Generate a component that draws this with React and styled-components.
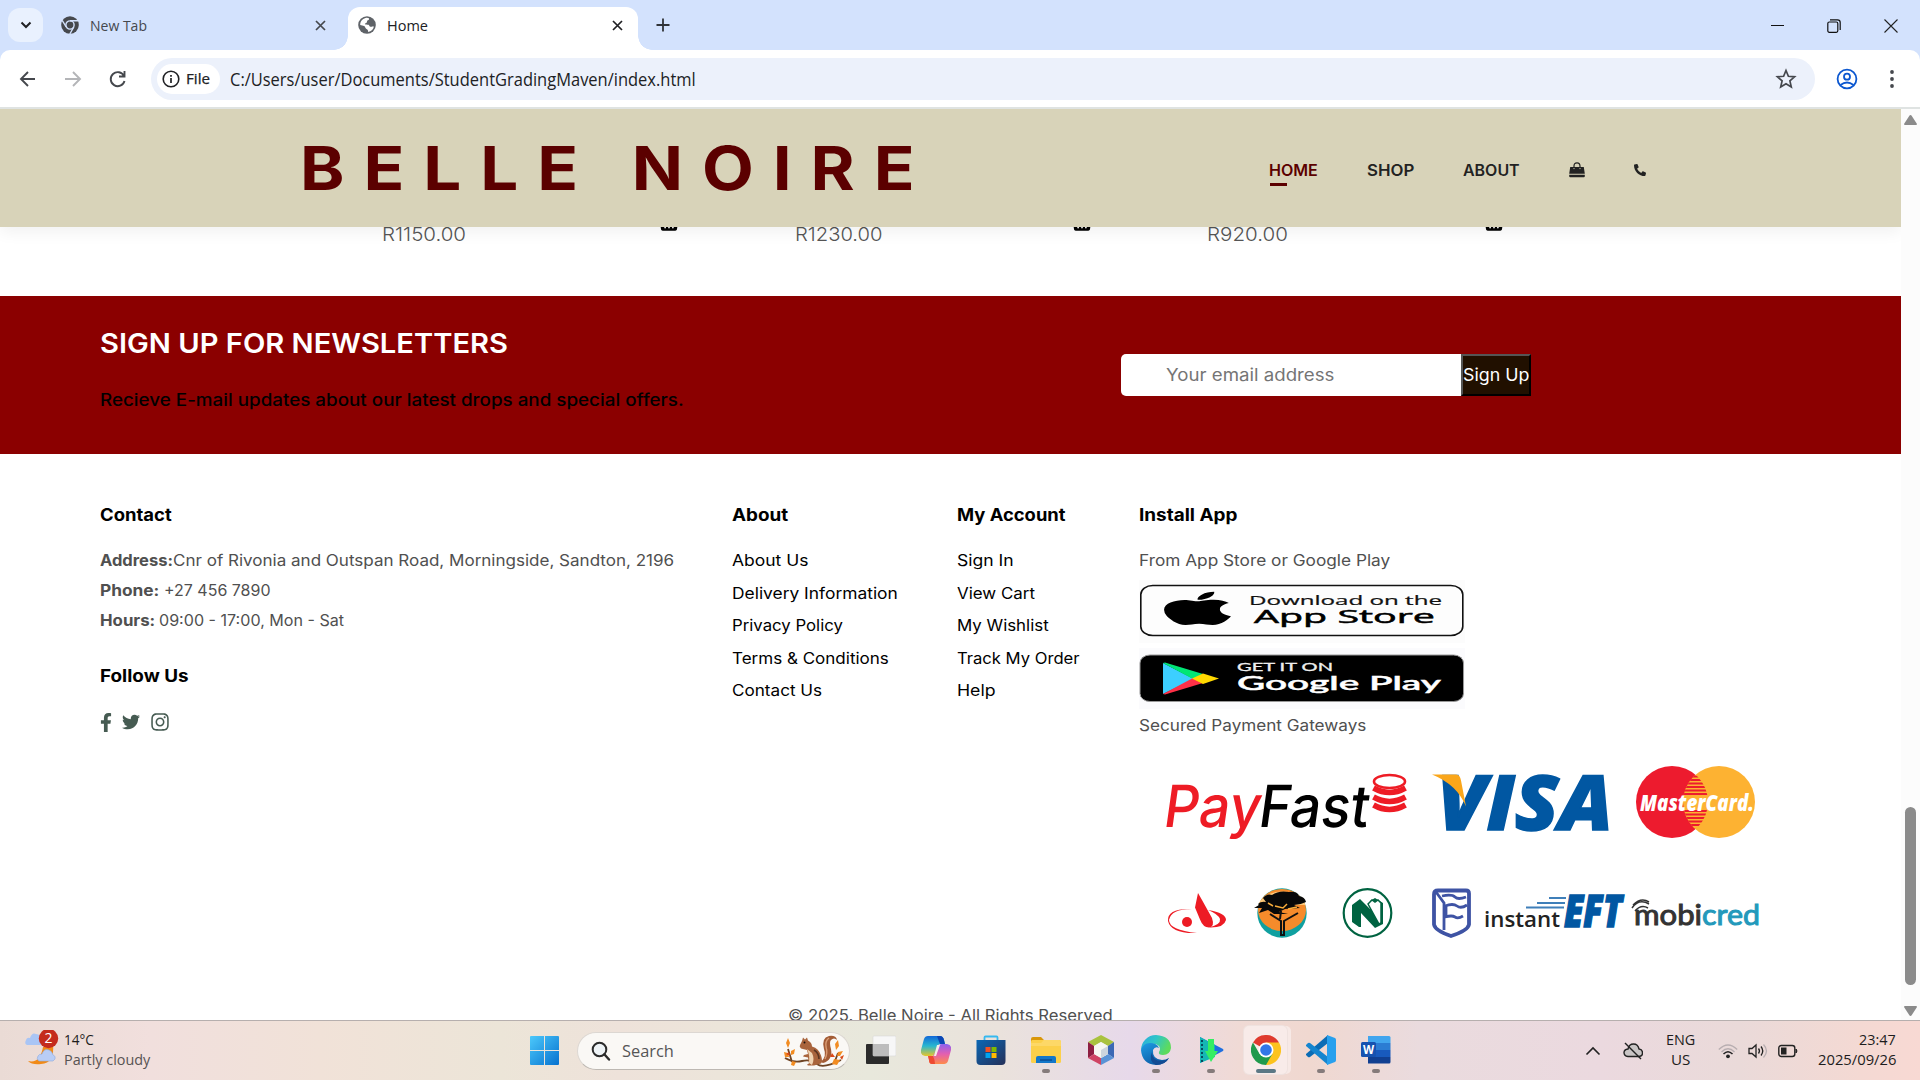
import React, { useLayoutEffect, useRef, useState } from "react";
import styled, { createGlobalStyle } from "styled-components";
import { FaFacebookF, FaTwitter, FaInstagram, FaPhoneAlt, FaShoppingBasket, FaApple } from "react-icons/fa";

const SITE = 'Inter, "Open Sans", sans-serif';
const SYS = '"Open Sans", "Noto Sans", sans-serif';

const GlobalStyle = createGlobalStyle`
  * { box-sizing: border-box; }
  html, body { margin: 0; padding: 0; overflow: hidden; background: #fff; }
  svg { display: block; flex: none; }
`;

/* ---------- text that keeps a given set width ---------- */
const FitBox = styled.span`
  display: inline-block;
  flex: none;
  width: ${(p) => p.$w}px;
  white-space: nowrap;
  vertical-align: top;
`;
const FitInner = styled.span`
  display: inline-block;
  transform-origin: 0 50%;
`;
function Fit({ w, children }) {
  const ref = useRef(null);
  const [scale, setScale] = useState(1);
  useLayoutEffect(() => {
    if (ref.current) setScale(w / ref.current.offsetWidth);
  }, [w]);
  return (
    <FitBox $w={w}>
      <FitInner ref={ref} style={{ transform: `scaleX(${scale})` }}>{children}</FitInner>
    </FitBox>
  );
}

/* ---------- window ---------- */
const Screen = styled.div`
  width: 1920px;
  height: 1080px;
  display: flex;
  flex-direction: column;
  overflow: hidden;
  background: #fff;
`;
const TabStrip = styled.div`
  height: 50px;
  flex: none;
  display: flex;
  align-items: flex-end;
  background: #d3e2fd;
  padding-left: 8px;
  font: 400 14.5px/20px ${SYS};
  color: #45484d;
`;
const TabSearch = styled.div`
  width: 35px;
  height: 34px;
  margin-bottom: 8px;
  border-radius: 12px;
  background: #e9f1fe;
  display: flex;
  align-items: center;
  justify-content: center;
`;
const Tab = styled.div`
  position: relative;
  display: flex;
  align-items: center;
  height: ${(p) => (p.$active ? 43 : 50)}px;
  width: ${(p) => (p.$active ? 290 : 305)}px;
  padding: ${(p) => (p.$active ? "0 15px 7px 10px" : "0 22px 0 18px")};
  gap: 11px;
  color: ${(p) => (p.$active ? "#202124" : "#45484d")};
  background: ${(p) => (p.$active ? "#fff" : "transparent")};
  border-radius: 12px 12px 0 0;
  &::before, &::after {
    content: "";
    display: ${(p) => (p.$active ? "block" : "none")};
    position: absolute;
    bottom: 0;
    width: 14px;
    height: 14px;
  }
  &::before { left: -14px; background: radial-gradient(circle at 0 0, transparent 13.5px, #fff 14px); }
  &::after { right: -14px; background: radial-gradient(circle at 100% 0, transparent 13.5px, #fff 14px); }
`;
const TabTitle = styled.div`padding-top: 2px;`;
const Spacer = styled.div`flex: 1;`;
const NewTab = styled.div`
  height: 50px;
  margin-left: 18px;
  display: flex;
  align-items: center;
`;
const WinControls = styled.div`
  height: 48px;
  display: flex;
  align-items: center;
  gap: 43px;
  padding-right: 22px;
`;
const ToolbarWrap = styled.div`
  height: 59px;
  flex: none;
  background: #d3e2fd;
`;
const Toolbar = styled.div`
  height: 59px;
  background: #fff;
  border-radius: 10px 10px 0 0;
  border-bottom: 2px solid #dfe3e2;
  display: flex;
  align-items: center;
  padding-left: 18px;
`;
const NavButtons = styled.div`
  display: flex;
  gap: 25px;
  width: 133px;
`;
const Omnibox = styled.div`
  width: 1664px;
  height: 42px;
  border-radius: 21px;
  background: #ecf1fb;
  display: flex;
  align-items: center;
  padding: 0 18px 0 6px;
  font: 400 17.5px/24px ${SYS};
  color: #202124;
`;
const FileChip = styled.div`
  width: 63px;
  height: 30px;
  border-radius: 15px;
  background: #fff;
  display: flex;
  align-items: center;
  gap: 6px;
  padding-left: 5px;
  margin-right: 10px;
  font: 500 14.5px/20px ${SYS};
  -webkit-text-stroke: 0.25px #202124;
`;
const ToolbarEnd = styled.div`
  display: flex;
  align-items: center;
  gap: 32px;
  margin-left: 21px;
`;

/* ---------- page ---------- */
const Viewport = styled.div`
  height: 911px;
  flex: none;
  display: flex;
`;
const Page = styled.div`
  width: 1901px;
  height: 911px;
  overflow: hidden;
  background: #fff;
  font-family: ${SITE};
`;
const Scrollbar = styled.div`
  width: 19px;
  background: #fcfcfc;
  display: flex;
  flex-direction: column;
  align-items: center;
  padding: 6px 1px 4px 0;
`;
const Thumb = styled.div`
  width: 11px;
  height: 178px;
  margin: auto 0 21px;
  border-radius: 6px;
  background: #8b8b8b;
`;
const Header = styled.header`
  position: relative;
  z-index: 2;
  height: 118px;
  display: flex;
  align-items: center;
  padding-left: 300px;
  background: #d8d3b9;
  box-shadow: 0 5px 15px rgba(0, 0, 0, 0.06);
`;
const Brand = styled.h1`
  margin: 0;
  width: 969px;
  font-weight: 700;
  font-size: 60.5px;
  line-height: 80px;
  color: #5b0000;
  letter-spacing: 17px;
`;
const Menu = styled.nav`
  display: flex;
  align-items: center;
  gap: 49px;
  padding-top: 4px;
`;
const MenuLink = styled.a`
  position: relative;
  font-size: 15.4px;
  font-weight: 600;
  line-height: 25px;
  color: ${(p) => (p.$active ? "#5b0000" : "#222")};
  &::after {
    content: "";
    display: ${(p) => (p.$active ? "block" : "none")};
    position: absolute;
    left: 1px;
    bottom: -3px;
    width: 17px;
    height: 3px;
    background: #5b0000;
  }
`;
const Products = styled.section`
  height: 69px;
  display: flex;
  padding-left: 382px;
  overflow: hidden;
`;
const Product = styled.div`
  width: 412.5px;
  display: flex;
  font-size: 19.3px;
  font-weight: 350;
  line-height: 30px;
  color: #555;
`;
const Price = styled.div`
  width: 277px;
  margin-top: -8px;
`;
const Basket = styled.div`
  margin-top: -14px;
  color: #000;
`;
const Newsletter = styled.section`
  height: 158px;
  display: flex;
  background: #8b0000;
  padding-left: 100px;
`;
const NewsText = styled.div`width: 1021px;`;
const NewsTitle = styled.h2`
  margin: 29px 0 0;
  font-weight: 600;
  font-size: 27.2px;
  line-height: 38px;
  color: #fff;
`;
const NewsPara = styled.p`
  margin: 25px 0 0;
  font-weight: 550;
  font-size: 16.8px;
  line-height: 24px;
  color: #000;
`;
const Form = styled.div`
  display: flex;
  height: 42px;
  margin-top: 58px;
  font-size: 17px;
  font-weight: 370;
  line-height: 42px;
`;
const EmailField = styled.div`
  width: 340px;
  padding-left: 45px;
  border-radius: 5px 0 0 5px;
  background: #fff;
  color: #757575;
`;
const SignUp = styled.div`
  width: 70px;
  background: #211000;
  color: #fff;
  line-height: 39px;
  border: 2px solid;
  border-color: #555 #000 #000 #555;
`;
const Footer = styled.footer`
  display: grid;
  grid-template-columns: 632px 225px 182px 700px;
  padding: 49px 0 0 100px;
  font-size: 15.4px;
  font-weight: 370;
  color: #505050;
`;
const Column = styled.div`
  display: flex;
  flex-direction: column;
`;
const Heading = styled.h4`
  margin: ${(p) => p.$top || 0}px 0 17px;
  font-size: 17.2px;
  font-weight: 700;
  line-height: 24px;
  color: #000;
`;
const Info = styled.div`
  display: flex;
  line-height: 33px;
  height: 30px;
  b { font-weight: 700; }
`;
const LinkItem = styled.a`
  height: 32.5px;
  line-height: 33px;
  color: #000;
`;
const Social = styled.div`
  display: flex;
  align-items: center;
  gap: 10px;
  height: 24px;
  margin-top: 5px;
  color: #465b52;
`;
const FacebookIcon = styled(FaFacebookF)`width: 12px;`;
const Badges = styled.div`
  display: flex;
  flex-direction: column;
  gap: 5px;
  margin: 6px 0 0;
`;
const Payments = styled.div`margin-top: 6px;`;
const Copyright = styled.div`
  display: flex;
  padding-left: 788px;
  font-size: 15.4px;
  font-weight: 370;
  line-height: 24px;
  color: #505050;
  margin-top: 48.5px;
`;

/* ---------- taskbar ---------- */
const Taskbar = styled.div`
  height: 60px;
  flex: none;
  display: flex;
  align-items: center;
  border-top: 1px solid #b6afae;
  background: linear-gradient(90deg, #eadbd5 0, #f1dfdd 150px, #f1e2d8 320px, #ece5d8 500px, #eee2da 620px, #ece5da 720px, #e8e8dc 870px, #eae2dc 1000px, #e7d9ea 1130px, #f0dad5 1240px, #f0d8d0 1310px, #eadbde 1420px, #ebd9df 1600px, #eadad9 1740px, #f4d9d3 1860px, #f8d9d3 1920px);
  font: 400 14.4px/20px ${SYS};
  color: #1d1d1d;
`;
const Weather = styled.div`
  width: 530px;
  display: flex;
  padding-left: 23px;
`;
const Lines = styled.div`
  display: flex;
  flex-direction: column;
  margin-top: -2px;
  align-items: ${(p) => p.$align || "flex-start"};
`;
const Muted = styled.div`color: #575353;`;
const SearchPill = styled.div`
  width: 273px;
  height: 38px;
  margin: 0 3px 0 18px;
  border-radius: 19px;
  background: #faf8f5;
  border: 1px solid #dcd7d2;
  border-bottom-color: #bdb8b2;
  display: flex;
  align-items: center;
  padding: 0 4px 0 13px;
  font-size: 17px;
  color: #555;
`;
const Apps = styled.div`display: flex;`;
const AppSlot = styled.div`
  width: 55px;
  height: 59px;
  display: flex;
  flex-direction: column;
  align-items: center;
  padding-top: 5px;
`;
const AppTile = styled.div`
  width: 43px;
  height: 48px;
  display: flex;
  flex-direction: column;
  align-items: center;
  padding-top: 9px;
  border-radius: 5px;
  background: ${(p) => (p.$active ? "#f8ebe9" : "transparent")};
  box-shadow: ${(p) => (p.$active ? "0 0 0 1px #efe2df, 4px 0 0 0 #f7e9e6" : "none")};
`;
const Indicator = styled.div`
  width: ${(p) => (p.$active ? 20 : 8)}px;
  height: 4px;
  margin-top: 4px;
  border-radius: 2px;
  background: ${(p) => (p.$active ? "#5b7885" : "#857b7b")};
  visibility: ${(p) => (p.$show ? "visible" : "hidden")};
`;
const Tray = styled.div`
  flex: 1;
  display: flex;
  align-items: center;
  padding-left: 182px;
`;
const TrayItem = styled.div`
  margin-right: ${(p) => p.$gap}px;
`;

/* ---------- small drawings ---------- */
const CloseX = ({ c = "#202124" }) => (
  <svg width="11" height="11" viewBox="0 0 11 11"><path d="M1 1l9 9M10 1l-9 9" stroke={c} strokeWidth="1.7" /></svg>
);
const ChromeGrey = () => (
  <svg width="18" height="18" viewBox="0 0 18 18">
    <circle cx="9" cy="9" r="8.8" fill="#45484d" />
    <circle cx="9" cy="9" r="4.1" fill="none" stroke="#d3e2fd" strokeWidth="1.4" />
    <path d="M9 4.7h8M5.2 11L1.2 4.3M12.8 11l-4 7" stroke="#d3e2fd" strokeWidth="1.4" />
  </svg>
);
const Globe = () => (
  <svg width="18" height="18" viewBox="0 0 18 18">
    <circle cx="9" cy="9" r="8.8" fill="#5f6368" />
    <path d="M7.500 2c3-.5 4 .5 3.500 1.500c-.5 1-2 .5-2 2s-1.500 1.500-2 2.200c-.5 1 2 .8 3.500 1c1 .3.8 2 2 2.100c1.500 0 3-.2 3.500-.8c-.5 3-2.500 5.500-6 6c.5-1.500-.3-2.500-1.500-3c-1.500-.8-1-2.500-2.500-3c-1-.4-2.500-.5-3.800-1c0-3.500 2-6.200 5.300-7z" fill="#fff" />
  </svg>
);
const ST = ({ w, ...p }) => <text textLength={w} lengthAdjust="spacingAndGlyphs" {...p} />;

const AppStoreBadge = () => (
  <svg width="326" height="63" viewBox="0 0 326 63">
    <rect width="326" height="63" fill="#fcfcfc" />
    <rect x="1.800" y="5.500" width="322" height="50" rx="12" ry="9" fill="#fdfdfd" stroke="#111" strokeWidth="1.600" />
    <g transform="translate(21.500 9.500) scale(.1895 .079)"><FaApple size="480" x="-45" color="#000" /></g>
    <ST x="110" y="24.500" w={193} fontFamily="Open Sans" fontSize="12.500" fill="#111" stroke="#111" strokeWidth=".2">Download on the</ST>
    <ST x="115" y="42.800" w={181} fontFamily="Open Sans" fontSize="18.500" fill="#000" stroke="#000" strokeWidth=".5">App Store</ST>
  </svg>
);
const PlayBadge = () => (
  <svg width="326" height="61" viewBox="0 0 326 61">
    <rect width="326" height="61" fill="#fbfbfd" />
    <rect x="1" y="7" width="323.500" height="46.500" rx="10" ry="8" fill="#000" stroke="#999" strokeWidth="1" />
    <path d="M24 15v31l31-15z" fill="#3ccfff" />
    <path d="M24 15l2-.5L64 26l-10 5z" fill="#00e676" />
    <path d="M24 46l2 .5L64 35l-10-5z" fill="#ff3047" />
    <path d="M64 25.500L80 30.500L64 36L53 30.500z" fill="#ffd800" />
    <ST x="98" y="23" w={96} fontFamily="Lato" fontSize="11" fill="#eee" stroke="#eee" strokeWidth=".3">GET IT ON</ST>
    <ST x="98" y="42" w={204} fontFamily="Lato" fontSize="20" fontWeight="600" fill="#fff" stroke="#fff" strokeWidth=".4">Google Play</ST>
  </svg>
);

const Gateways = () => (
  <svg width="640" height="210" viewBox="0 0 640 210">
    <defs>
      <clipPath id="mcOverlap"><circle cx="533" cy="57" r="36" /></clipPath>
      <clipPath id="mcRight"><circle cx="580" cy="57" r="36" /></clipPath>
    </defs>
    {/* PayFast */}
    <g transform="translate(27 82) skewX(-8)" fontFamily="Inter" fontSize="58" fontWeight="450">
      <ST x="-4" y="0" w={97} fill="#ee1c25">Pay</ST>
      <ST x="91" y="0" w={110} fill="#000">Fast</ST>
    </g>
    <ellipse cx="250.500" cy="36.500" rx="15.500" ry="6.500" fill="none" stroke="#ee1c25" strokeWidth="2.600" />
    <path d="M234.500 43q16 9 32 0M234.500 52q16 9 32 0M234.500 60q16 9 32 0" stroke="#ee1c25" strokeWidth="5.500" fill="none" />
    {/* Visa */}
    <ST x="298" y="85" w={176} fontFamily="Open Sans" fontSize="77" fontWeight="800" fontStyle="italic" fill="#0157a2" stroke="#0157a2" strokeWidth="1.500">VISA</ST>
    <path d="M293 29.500h24q4 0 5 6l5 26q-9-22-34-32z" fill="#faa61a" />
    {/* MasterCard */}
    <circle cx="533" cy="57" r="36" fill="#ed1b2e" />
    <circle cx="580" cy="57" r="36" fill="#fdb232" />
    <g clipPath="url(#mcOverlap)"><g clipPath="url(#mcRight)">
      <path d="M540 31.500h34M540 35h34M540 38.500h34M540 42h34M540 45.500h34M540 49h34M540 66h34M540 69.500h34M540 73h34M540 76.500h34M540 80h34" stroke="#ed1b2e" strokeWidth="1.900" />
    </g></g>
    <ST x="501" y="65.500" w={114} fontFamily="Open Sans" fontSize="22" fontWeight="800" fontStyle="italic" fill="#fff">MasterCard.</ST>
    {/* Absa */}
    <g fill="#ed1b24">
      <ellipse cx="48" cy="177" rx="5" ry="5" />
      <path d="M59 148l4 7 10 18q3 9-3 9.500q-6 0-9-8l-5-12z" />
      <path d="M53 164q-21 0-23 11q0 10 28 13q-26 1-29-12q-1-13 24-12z" />
      <path d="M69 165q18 3 18 10q-2 8-17 7.500q12-3 11-8.500q-2-5-12-9z" />
    </g>
    {/* FNB */}
    <circle cx="143" cy="168" r="24.700" fill="#10a0a0" />
    <ellipse cx="143" cy="165" rx="24" ry="21" fill="#f68b2b" />
    <path d="M119.500 160a24 17 0 0 1 47 0z" fill="#fdc878" />
    <path d="M119 159q3-3 8-2l-3-4q4-5 9-3q7-5 17-3q8-1 10 4q6 1 7 6q-6 3-12 3l6 3-15 1-6 3 9 2-14 0-6-4-9 3 3-5-8 0 5-3z" fill="#080808" />
    <path d="M131 169l11 7v14h3v-14l14-8M141 174l1-8" stroke="#111" strokeWidth="2" fill="none" />
    <path d="M136 161l8 2 4-4M129 158l5 3M149 164l9-2" stroke="#f9ad3b" strokeWidth="1.500" fill="none" />
    {/* Nedbank */}
    <circle cx="228.500" cy="168" r="23.800" fill="#fff" stroke="#006341" strokeWidth="2.200" />
    <path d="M213 160l8-6 10 10v-8l5-3 8 5v21l-8 4-14-15v14h-2l-7-5z" fill="#006341" />
    <path d="M229 159l4-4 3 2 3-2 3 3v20l-2 1z" fill="#fff" stroke="#006341" strokeWidth="1.500" />
    {/* Standard Bank */}
    <path d="M299 145.500h28q3 0 3 3v31q-1 6-18 11.500q-16-5.500-17-11.500v-30q0-4 4-4z" fill="#fff" stroke="#3e53a4" strokeWidth="3.800" />
    <path d="M297 147l8 11v27M303 151q10-2 13 1t11 0M306 161q8-3 12 0t10-1M307 161v10M306 172q7-2 10 0t8-1" stroke="#3e53a4" strokeWidth="2.800" fill="none" />
    {/* instant EFT */}
    <ST x="345" y="182" w={76} fontFamily="Open Sans" fontSize="22" fontWeight="600" fill="#222">instant</ST>
    <path d="M410 153h17M398 158h28M387 162.500h38" stroke="#3f7fb9" strokeWidth="1.900" />
    <ST x="425" y="182" w={58} fontFamily="Open Sans" fontSize="45" fontWeight="800" fontStyle="italic" fill="#0157a2" stroke="#0157a2" strokeWidth="1.500">EFT</ST>
    {/* mobicred */}
    <g fontFamily="Lato" fontSize="29.500" strokeWidth="1">
      <ST x="495" y="179.500" w={68} fill="#333" stroke="#333">mobi</ST>
      <ST x="563" y="179.500" w={58} fill="#2399bb" stroke="#2399bb">cred</ST>
    </g>
    <path d="M493 163q7-10 17-4M496 166q6-7 13-3M494 160q8-8 16-3" stroke="#333" strokeWidth="1.500" fill="none" />
  </svg>
);

const WeatherIcon = () => (
  <svg width="41" height="36" viewBox="0 0 41 36">
    <path d="M5 31q12 3 15-14l10-3q2 19-12 20q-9 1-13-3z" fill="#f18a17" />
    <path d="M4 15q-3-1-1-5q1-3 4-2q2-6 6-4q5 0 5 6v5z" fill="#a9c5f5" />
    <path d="M16 31q-3-2-1-5q1-2 4-2q2-6 7-4q3 1 4 5q3 1 2 4l-2 2z" fill="#b9cdf6" stroke="#8fabdf" strokeWidth=".6" />
    <circle cx="25.500" cy="8.500" r="9.700" fill="#c42b1c" />
    <text x="25.500" y="13.300" textAnchor="middle" fontFamily="Open Sans" fontSize="14" fill="#fff">2</text>
  </svg>
);
const WeatherArt = styled.div`margin-top: -2px;`;
const WinLogo = () => (
  <svg width="29" height="29" viewBox="0 0 29 29">
    <defs><linearGradient id="wl" x1="0" y1="0" x2="1" y2="1"><stop offset="0" stopColor="#4cc9fb" /><stop offset="1" stopColor="#0672cf" /></linearGradient></defs>
    <path d="M0 1q0-1 1-1h13v14H0zM15 0h13q1 0 1 1v13H15zM0 15h14v14H1q-1 0-1-1zM15 15h14v13q0 1-1 1H15z" fill="url(#wl)" />
  </svg>
);
const Squirrel = () => (
  <svg width="62" height="32" viewBox="0 0 62 32">
    <path d="M2 23q8 5 17 3t15 3 24-4M9 27l-4-13M52 26l3-8" stroke="#6f4424" strokeWidth="1.800" fill="none" />
    <path d="M38 27q6-6 3-13Q38 3 46 1q7-1 8 4q-3-3-6 0q-2 2 0 9q2 11-8 14z" fill="#a35c36" />
    <path d="M42 24q3-6 1-12q-1-6 3-9" stroke="#d99c74" strokeWidth="1.400" fill="none" />
    <path d="M19 6l1-3.500 2 2 2-2 1 3q4 2 4 6q7 2 9 9q2 6 0 8l-7 2h-6q-2-1 1-2l-1-6-5-1 1-1.500 4-1-1-4-6-1.500q-2-2-1-3.500z" fill="#a9643c" />
    <path d="M24 14q3 6 2 14l3 2q3-6 0-12z" fill="#f0d3b2" />
    <path d="M31 15q5 3 5 9" stroke="#5c3521" strokeWidth="1.600" fill="none" />
    <circle cx="21.500" cy="7.500" r="1" fill="#1b1310" />
    <path d="M5 13l-2-5 2-5 2 5zM2 22l-1-5 4 1 1 4zM8 20l0-4 4-2-1 5zM53 15l-1-6 3-4 1 6zM54 21l1-4 5-1-3 5zM49 29l2-5 6 1-3 5zM8 30l1-4 4 1-2 4z" fill="#f28c22" />
    <path d="M3 19l3-2 1 4zM47 22l2-4 3 4zM57 22l4-2-2 5z" fill="#db4a18" />
  </svg>
);
const appIcons = {
  view: (
    <svg width="30" height="30" viewBox="0 0 30 30">
      <rect x="0" y="9" width="23" height="20" rx="1" fill="#2b2b2b" />
      <rect x="7" y="1" width="23" height="20" rx="1" fill="#f7f7f7" stroke="#d8d8d8" strokeWidth=".6" />
      <rect x="7" y="9" width="16" height="12" fill="#bdbdbd" />
    </svg>
  ),
  copilot: (
    <svg width="30" height="30" viewBox="0 0 30 30">
      <defs>
        <linearGradient id="c1" x1="0" y1="0" x2="0" y2="1"><stop offset="0" stopColor="#1268d8" /><stop offset=".5" stopColor="#28b7d0" /><stop offset="1" stopColor="#e8c62a" /></linearGradient>
        <linearGradient id="c2" x1="0" y1="0" x2="0" y2="1"><stop offset="0" stopColor="#8c62f0" /><stop offset=".5" stopColor="#e35fb0" /><stop offset="1" stopColor="#ff8b4a" /></linearGradient>
      </defs>
      <path d="M7 1h12q3 0 4 4l1 4h-6l-2 5-2 5q-1 2-4 2H4q-5-1-4-6l3-11q1-3 4-3z" fill="url(#c1)" />
      <path d="M16 1h3q3 0 4 4l1 4h-5q-2-5-3-8z" fill="#0b47b4" />
      <path d="M23 29H11q-3 0-3-4l-1-4h5l3-5 2-5q1-2 4-2h5q5 1 4 6l-3 11q-1 3-4 3z" fill="url(#c2)" />
      <path d="M14 29h-3q-3 0-3-4l-1-4h5q2 4 2 8z" fill="#ee4a32" />
      <path d="M13 21l3-11h3l-4 11z" fill="#f5eee8" />
    </svg>
  ),
  store: (
    <svg width="30" height="30" viewBox="0 0 30 30">
      <defs><linearGradient id="st" x1="0" y1="0" x2="1" y2="1"><stop offset="0" stopColor="#0a67b5" /><stop offset="1" stopColor="#253058" /></linearGradient></defs>
      <path d="M8.500 7V2.500q0-1 1-1h11q1 0 1 1V7" fill="none" stroke="#36b9f0" strokeWidth="1.800" />
      <path d="M.5 5h29v21q0 4-4 4h-21q-4 0-4-4z" fill="url(#st)" />
      <path d="M9.500 12h5v5h-5z" fill="#f25022" /><path d="M15.500 12h5v5h-5z" fill="#7fba00" />
      <path d="M9.500 18h5v5h-5z" fill="#00a4ef" /><path d="M15.500 18h5v5h-5z" fill="#ffb900" />
    </svg>
  ),
  folder: (
    <svg width="30" height="30" viewBox="0 0 30 30">
      <path d="M0 4q0-2 2-2h8l3 3h15v5H0z" fill="#d9970a" />
      <rect y="5" width="30" height="23" rx="1.500" fill="#fcd04a" />
      <path d="M0 8h10l3-3h15q2 0 2 2v4H0z" fill="#fdd867" />
      <path d="M5 28v-5q0-2 2-2h16q2 0 2 2v5z" fill="#1377c9" /><path d="M9 25h12" stroke="#0b4d93" strokeWidth="1.500" />
    </svg>
  ),
  netbeans: (
    <svg width="30" height="30" viewBox="0 0 30 30">
      <path d="M15 0l13 7-6 4-7-4-7 4-6-4z" fill="#a9c23f" />
      <path d="M2 7l6 4v8l-6 4z" fill="#8d1f42" /><path d="M2 23l6-4 7 4v7z" fill="#cf4464" />
      <path d="M28 7v16l-6-4v-8z" fill="#3b68b4" /><path d="M28 23l-13 7v-7l7-4z" fill="#5a93d6" />
      <path d="M15 7l7 4v8l-7 4-7-4v-8z" fill="#f6f7f1" /><path d="M15 15l7-4v8l-7 4z" fill="#cdd5dd" />
    </svg>
  ),
  edge: (
    <svg width="30" height="30" viewBox="0 0 30 30">
      <defs>
        <linearGradient id="e1" x1="0" y1="0" x2="1" y2=".4"><stop offset="0" stopColor="#2aa8e0" /><stop offset=".5" stopColor="#2fc6c8" /><stop offset="1" stopColor="#5edb5c" /></linearGradient>
        <linearGradient id="e2" x1="0" y1="0" x2=".6" y2="1"><stop offset="0" stopColor="#1e9de4" /><stop offset="1" stopColor="#0c59a4" /></linearGradient>
      </defs>
      <path d="M0 15A15 15 0 0 1 15 0q15 1 15 13q-1 7-8 7q-5 0-4-3q2-3 0-6q-7-6-18 4z" fill="url(#e1)" />
      <path d="M0 15Q2 8 9 8q7 0 9 5q-4-2-6 2q-1 9 9 10q4 0 7-2q-4 7-13 7Q1 29 0 15z" fill="url(#e2)" />
      <path d="M11 17q0 9 10 9q4 0 7-3q-4 7-13 7q-8-4-4-13z" fill="#134b93" />
    </svg>
  ),
  play: (
    <svg width="30" height="30" viewBox="0 0 30 30">
      <path d="M4 2l23 12q1 1 0 2L4 28z" fill="#1f6fe0" /><path d="M4 2l15 8v12L4 28z" fill="#15b6b4" />
      <path d="M12 4h6v12h4l-7 11-6-11h3z" fill="#35ee62" /><path d="M6 5v22" stroke="#064a60" strokeWidth="2" strokeDasharray="2 2" />
    </svg>
  ),
  chrome: (
    <svg width="30" height="30" viewBox="0 0 30 30">
      <path d="M15 15L2 7.500A15 15 0 0 1 28 7.500z" fill="#df3a2e" />
      <path d="M15 7.500h13A15 15 0 0 1 15 30z" fill="#fcc31e" />
      <path d="M2 7.500A15 15 0 0 0 15 30l6.500-11.300L8.500 18.700z" fill="#209a4c" />
      <circle cx="15" cy="15" r="7.500" fill="#fff" /><circle cx="15" cy="15" r="5.800" fill="#3277e8" />
    </svg>
  ),
  code: (
    <svg width="30" height="30" viewBox="0 0 30 30">
      <path d="M22 0v8L4 22q-1 .5-2 0L0 20v-1z" fill="#0b6cb5" />
      <path d="M22 30v-8L4 8q-1-.5-2 0L0 10v1z" fill="#1585cf" />
      <path d="M21 0l8 3q1 .5 1 2v20q0 1.500-1 2l-8 3z" fill="#27a0ee" />
    </svg>
  ),
  word: (
    <svg width="30" height="30" viewBox="0 0 30 30">
      <path d="M7 1h21q1.500 0 1.500 1.500V8H7z" fill="#41a5ee" /><path d="M7 8h22.500v7H7z" fill="#2b7cd3" />
      <path d="M7 15h22.500v7H7z" fill="#185abd" /><path d="M7 22h22.500v5q0 1.500-1.500 1.500H7z" fill="#103f91" />
      <rect y="7" width="15" height="15" rx="1.500" fill="#1652b0" />
      <text x="7.500" y="19" textAnchor="middle" fontFamily="Open Sans" fontWeight="700" fontSize="11.500" fill="#fff">W</text>
    </svg>
  ),
};
const apps = [["view"], ["copilot"], ["store"], ["folder", 1], ["netbeans"], ["edge", 1], ["play", 1], ["chrome", 1, 1], ["code", 1], ["word", 1]];

const aboutLinks = [["About Us", 76], ["Delivery Information", 166], ["Privacy Policy", 111], ["Terms & Conditions", 157], ["Contact Us", 90]];
const accountLinks = [["Sign In", 57], ["View Cart", 78], ["My Wishlist", 92], ["Track My Order", 123], ["Help", 39]];
const products = [["R1150.00", 84], ["R1230.00", 88], ["R920.00", 81]];

export default function App() {
  return (
    <Screen>
      <GlobalStyle />
      <TabStrip>
        <TabSearch>
          <svg width="12" height="8" viewBox="0 0 12 8"><path d="M1.500 1.500L6 6l4.500-4.500" stroke="#202124" strokeWidth="2" fill="none" /></svg>
        </TabSearch>
        <Tab><ChromeGrey /><TabTitle><Fit w={57}>New Tab</Fit></TabTitle><Spacer /><CloseX c="#45484d" /></Tab>
        <Tab $active><Globe /><TabTitle><Fit w={41}>Home</Fit></TabTitle><Spacer /><CloseX /></Tab>
        <NewTab><svg width="14" height="14" viewBox="0 0 14 14"><path d="M7 0.500v13M.5 7h13" stroke="#303338" strokeWidth="1.800" /></svg></NewTab>
        <Spacer />
        <WinControls>
          <svg width="14" height="14" viewBox="0 0 14 14"><path d="M1 6.500h13" stroke="#111" strokeWidth="1" /></svg>
          <svg width="14" height="14" viewBox="0 0 14 14"><rect x=".8" y="3" width="10" height="10.300" rx="1.500" fill="none" stroke="#111" strokeWidth="1.200" /><path d="M3 .8h7.500q2.700 0 2.700 2.700V11" fill="none" stroke="#111" strokeWidth="1.200" /></svg>
          <svg width="14" height="14" viewBox="0 0 14 14"><path d="M.5.5l13 13M13.500.5l-13 13" stroke="#222" strokeWidth="1.100" /></svg>
        </WinControls>
      </TabStrip>
      <ToolbarWrap>
        <Toolbar>
          <NavButtons>
            <svg width="20" height="20" viewBox="0 0 20 20"><path d="M17 10H3.500M10 3l-7 7 7 7" stroke="#45484d" strokeWidth="1.900" fill="none" /></svg>
            <svg width="20" height="20" viewBox="0 0 20 20"><path d="M2 10h14.500M10 3l7 7-7 7" stroke="#b4b5b8" strokeWidth="1.900" fill="none" /></svg>
            <svg width="20" height="20" viewBox="0 0 20 20"><path d="M16 7A7 7 0 1 0 16.500 12M16.500 2v5.500H11" stroke="#45484d" strokeWidth="1.900" fill="none" /></svg>
          </NavButtons>
          <Omnibox>
            <FileChip>
              <svg width="18" height="18" viewBox="0 0 18 18"><circle cx="9" cy="9" r="7.800" fill="none" stroke="#202124" strokeWidth="1.600" /><path d="M9 8v5M9 5v1.700" stroke="#202124" strokeWidth="1.700" /></svg>
              <Fit w={24}>File</Fit>
            </FileChip>
            <Fit w={466}>C:/Users/user/Documents/StudentGradingMaven/index.html</Fit>
            <Spacer />
            <svg width="22" height="22" viewBox="0 0 22 22"><path d="M11 2.500l2.400 5.800 6.200.5-4.700 4.100 1.400 6.100L11 15.700 5.700 19l1.400-6.100-4.700-4.100 6.200-.5z" fill="none" stroke="#45484d" strokeWidth="1.700" /></svg>
          </Omnibox>
          <ToolbarEnd>
            <svg width="22" height="22" viewBox="0 0 22 22"><circle cx="11" cy="11" r="9.400" fill="none" stroke="#0b57d0" strokeWidth="1.800" /><circle cx="11" cy="8.700" r="3" fill="none" stroke="#0b57d0" strokeWidth="1.800" /><path d="M4.500 17q6.500-5 13 0" fill="none" stroke="#0b57d0" strokeWidth="1.800" /></svg>
            <svg width="4" height="18" viewBox="0 0 4 18"><g fill="#45484d"><circle cx="2" cy="2" r="1.900" /><circle cx="2" cy="9" r="1.900" /><circle cx="2" cy="16" r="1.900" /></g></svg>
          </ToolbarEnd>
        </Toolbar>
      </ToolbarWrap>

      <Viewport>
        <Page>
          <Header>
            <Brand><Fit w={633}>BELLE NOIRE</Fit></Brand>
            <Menu>
              <MenuLink $active><Fit w={49}>HOME</Fit></MenuLink>
              <MenuLink><Fit w={47}>SHOP</Fit></MenuLink>
              <MenuLink><Fit w={57}>ABOUT</Fit></MenuLink>
              <svg width="16" height="16" viewBox="0 0 16 16"><path d="M1.200 5h13.600l1 6.800H.2zM.2 12.700h15.600v1.600q0 1-1 1H1.200q-1 0-1-1z" fill="#222" /><path d="M5 7V4q0-3.200 3-3.200T11 4v3" fill="none" stroke="#222" strokeWidth="1.200" /><path d="M4.500 6.600h1M10.500 6.600h1" stroke="#d8d3b9" strokeWidth="1" /></svg>
              <FaPhoneAlt size={12} color="#222" />
            </Menu>
          </Header>
          <Products>
            {products.map(([price, w]) => (
              <Product key={price}>
                <Price><Fit w={w}>{price}</Fit></Price>
                <Basket><FaShoppingBasket size={20} /></Basket>
              </Product>
            ))}
          </Products>
          <Newsletter>
            <NewsText>
              <NewsTitle><Fit w={408}>SIGN UP FOR NEWSLETTERS</Fit></NewsTitle>
              <NewsPara><Fit w={584}>Recieve E-mail updates about our latest drops and special offers.</Fit></NewsPara>
            </NewsText>
            <Form>
              <EmailField><Fit w={168}>Your email address</Fit></EmailField>
              <SignUp><Fit w={66}>Sign Up</Fit></SignUp>
            </Form>
          </Newsletter>
          <Footer>
            <Column>
              <Heading><Fit w={72}>Contact</Fit></Heading>
              <Info><b><Fit w={73}>Address:</Fit></b><Fit w={501}>Cnr of Rivonia and Outspan Road, Morningside, Sandton, 2196</Fit></Info>
              <Info><b><Fit w={64}>Phone:&nbsp;</Fit></b><Fit w={107}>+27 456 7890</Fit></Info>
              <Info><b><Fit w={59}>Hours:&nbsp;</Fit></b><Fit w={185}>09:00 - 17:00, Mon - Sat</Fit></Info>
              <Heading $top={30}><Fit w={89}>Follow Us</Fit></Heading>
              <Social>
                <FacebookIcon size={19} />
                <FaTwitter size={18} />
                <FaInstagram size={20} />
              </Social>
            </Column>
            <Column>
              <Heading><Fit w={56}>About</Fit></Heading>
              {aboutLinks.map(([t, w]) => <LinkItem key={t}><Fit w={w}>{t}</Fit></LinkItem>)}
            </Column>
            <Column>
              <Heading><Fit w={109}>My Account</Fit></Heading>
              {accountLinks.map(([t, w]) => <LinkItem key={t}><Fit w={w}>{t}</Fit></LinkItem>)}
            </Column>
            <Column>
              <Heading><Fit w={98}>Install App</Fit></Heading>
              <Info><Fit w={251}>From App Store or Google Play</Fit></Info>
              <Badges><AppStoreBadge /><PlayBadge /></Badges>
              <Info><Fit w={227}>Secured Payment Gateways</Fit></Info>
              <Payments><Gateways /></Payments>
            </Column>
          </Footer>
          <Copyright><Fit w={325}>© 2025. Belle Noire - All Rights Reserved</Fit></Copyright>
        </Page>
        <Scrollbar>
          <svg width="13" height="10" viewBox="0 0 13 10"><path d="M6.500 0q.8 0 1.300.9L13 9q0 1-1 1H1Q0 10 0 9L5.200.9Q5.700 0 6.500 0z" fill="#8b8b8b" /></svg>
          <Thumb />
          <svg width="13" height="10" viewBox="0 0 13 10"><path d="M6.500 10q.8 0 1.300-.9L13 1q0-1-1-1H1Q0 0 0 1l5.200 8.100q.5.900 1.300.9z" fill="#8b8b8b" /></svg>
        </Scrollbar>
      </Viewport>

      <Taskbar>
        <Weather>
          <WeatherArt><WeatherIcon /></WeatherArt>
          <Lines>
            <Fit w={30}>14°C</Fit>
            <Muted><Fit w={86}>Partly cloudy</Fit></Muted>
          </Lines>
        </Weather>
        <WinLogo />
        <SearchPill>
          <svg width="20" height="20" viewBox="0 0 20 20"><circle cx="8.500" cy="8.500" r="6.800" fill="#eef3f6" stroke="#2b2b2b" strokeWidth="2" /><path d="M13.300 13.300L18 18.500" stroke="#2b2b2b" strokeWidth="2.400" strokeLinecap="round" /></svg>
          <TrayItem $gap={11} />
          <Fit w={52}>Search</Fit>
          <Spacer />
          <Squirrel />
        </SearchPill>
        <Apps>
          {apps.map(([name, show, active]) => (
            <AppSlot key={name}>
              <AppTile $active={active}>
                {appIcons[name]}
                <Indicator $show={show} $active={active} />
              </AppTile>
            </AppSlot>
          ))}
        </Apps>
        <Tray>
          <TrayItem $gap={22}><svg width="16" height="10" viewBox="0 0 16 10"><path d="M1.500 8.500L8 2l6.500 6.500" stroke="#222" strokeWidth="1.600" fill="none" /></svg></TrayItem>
          <TrayItem $gap={23}>
            <svg width="20" height="18" viewBox="0 0 20 18"><path d="M5 14.500q-4-.5-4-4 .2-3 4-3.500Q6 2 10.500 2t5.500 5q3.500.5 3.500 4t-4 3.500z" fill="#c9c5c5" stroke="#222" strokeWidth="1.400" /><path d="M2 1l16 16" stroke="#222" strokeWidth="1.500" /></svg>
          </TrayItem>
          <TrayItem $gap={23}><Lines $align="center"><Fit w={29}>ENG</Fit><Fit w={19}>US</Fit></Lines></TrayItem>
          <TrayItem $gap={10}>
            <svg width="20" height="16" viewBox="0 0 20 16"><path d="M.8 6.500q9.200-9 18.400 0M3.500 9q6.500-6.500 13 0" stroke="#b8aeb1" strokeWidth="1.300" fill="none" /><path d="M5.500 11q4.500-4.500 9 0" stroke="#222" strokeWidth="1.500" fill="none" /><circle cx="10" cy="13.300" r="1.900" fill="#222" /></svg>
          </TrayItem>
          <TrayItem $gap={10}>
            <svg width="20" height="16" viewBox="0 0 20 16"><path d="M1 5.500h3L8 2v12l-4-3.500H1z" stroke="#222" strokeWidth="1.300" fill="none" /><path d="M10.500 5.500q2 2.500 0 5M13 3.500q3.500 4.500 0 9" stroke="#222" strokeWidth="1.300" fill="none" /><path d="M15.500 1.500q6 6.500 0 13" stroke="#b8aeb1" strokeWidth="1.300" fill="none" /></svg>
          </TrayItem>
          <TrayItem $gap={20}>
            <svg width="20" height="14" viewBox="0 0 20 14"><rect x=".8" y="1.500" width="16" height="11" rx="2.500" fill="none" stroke="#222" strokeWidth="1.400" /><rect x="3" y="3.500" width="5.500" height="7" fill="#222" /><path d="M18 5q2 2 0 4z" fill="#222" stroke="#222" /></svg>
          </TrayItem>
          <Lines $align="flex-end"><Fit w={37}>23:47</Fit><Fit w={78}>2025/09/26</Fit></Lines>
        </Tray>
      </Taskbar>
    </Screen>
  );
}
